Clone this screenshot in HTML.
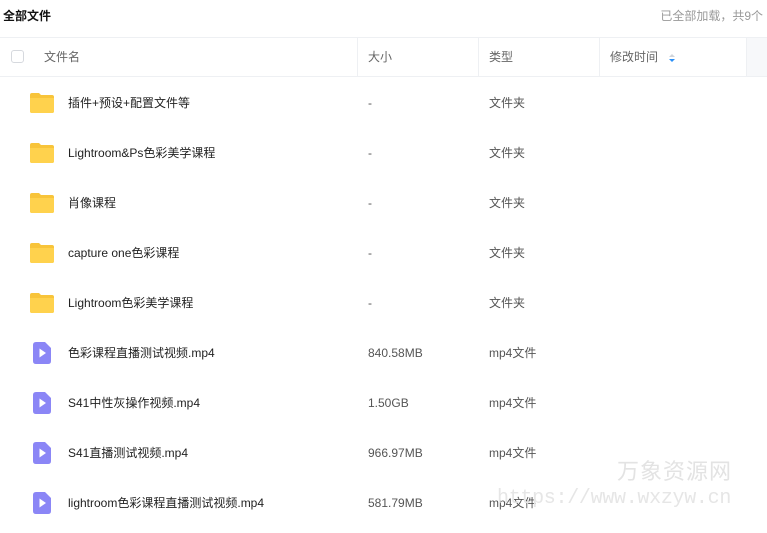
<!DOCTYPE html><html><head><meta charset="utf-8"><style>
body{margin:0;width:767px;height:533px;background:#fff;font-family:"Liberation Sans","Noto Sans CJK SC",sans-serif;font-size:12px;line-height:16px;color:#333;position:relative;overflow:hidden}
.a{position:absolute;white-space:nowrap}
.hd{position:absolute;top:37px;left:0;width:767px;height:40px;border-top:1px solid #eef0f3;border-bottom:1px solid #eef0f3;box-sizing:border-box}
.vl{position:absolute;top:37px;height:40px;width:1px;background:#eef0f3}
.row{position:absolute;left:0;width:767px;height:50px}
.row div{line-height:16px;height:16px}
.row .n{position:absolute;left:68px;top:17px;color:#222}
.row .s{position:absolute;left:368px;top:17px;color:#555}
.row .t{position:absolute;left:489px;top:17px;color:#555}
.fold{position:absolute;left:30px;top:15px;width:24px;height:20px}
.vid{position:absolute;left:33px;top:14px;width:18px;height:22px}
</style></head><body>
<div class="a" style="left:3px;top:8px;font-weight:bold;color:#111">全部文件</div>
<div class="a" style="right:4px;top:8px;color:#999">已全部加载，共9个</div>
<div class="hd"></div>
<div class="a" style="left:746px;top:38px;width:21px;height:38px;background:#f7f8fa"></div>
<div class="vl" style="left:357px"></div><div class="vl" style="left:478px"></div><div class="vl" style="left:599px"></div><div class="vl" style="left:746px"></div>
<div class="a" style="left:11px;top:50px;width:13px;height:13px;border:1px solid #d6d9de;border-radius:3px;box-sizing:border-box"></div>
<div class="a" style="left:44px;top:49px;color:#666">文件名</div>
<div class="a" style="left:368px;top:49px;color:#666">大小</div>
<div class="a" style="left:489px;top:49px;color:#666">类型</div>
<div class="a" style="left:610px;top:49px;color:#666">修改时间</div>
<svg class="a" style="left:668px;top:53px" width="8" height="10"><path d="M1 4L4 1L7 4Z" fill="#d0d4da"/><path d="M1 6L4 9L7 6Z" fill="#2a8ff7"/></svg>
<div id="rows"></div>
<div class="a" style="left:617px;top:458px;font-size:22px;line-height:28px;color:#e3e3e3;letter-spacing:1px">万象资源网</div>
<div class="a" style="left:497px;top:487px;font-size:20px;line-height:24px;color:#e6e6e6;font-family:'Liberation Mono',monospace;letter-spacing:-0.3px">https://www.wxzyw.cn</div>
<script>
var d=[["插件+预设+配置文件等","-","文件夹",0],["Lightroom&amp;Ps色彩美学课程","-","文件夹",0],["肖像课程","-","文件夹",0],["capture one色彩课程","-","文件夹",0],["Lightroom色彩美学课程","-","文件夹",0],["色彩课程直播测试视频.mp4","840.58MB","mp4文件",1],["S41中性灰操作视频.mp4","1.50GB","mp4文件",1],["S41直播测试视频.mp4","966.97MB","mp4文件",1],["lightroom色彩课程直播测试视频.mp4","581.79MB","mp4文件",1]];
var h="";d.forEach(function(r,i){var ic=r[3]?'<svg class="vid" viewBox="0 0 18 22"><path d="M3 0H12L18 6V19Q18 22 15 22H3Q0 22 0 19V3Q0 0 3 0Z" fill="#8b86f6"/><path d="M6.5 6.5L13 11L6.5 15.5Z" fill="#fff"/></svg>':'<svg class="fold" viewBox="0 0 24 20"><path d="M2 0H9L11 2H22Q24 2 24 4V18Q24 20 22 20H2Q0 20 0 18V2Q0 0 2 0Z" fill="#f8c43a"/><path d="M0 5H24V18Q24 20 22 20H2Q0 20 0 18Z" fill="#ffd24d"/></svg>';
h+='<div class="row" style="top:'+(78+i*50)+'px">'+ic+'<div class="n">'+r[0]+'</div><div class="s">'+r[1]+'</div><div class="t">'+r[2]+'</div></div>';});
document.getElementById("rows").innerHTML=h;
</script>
</body></html>
